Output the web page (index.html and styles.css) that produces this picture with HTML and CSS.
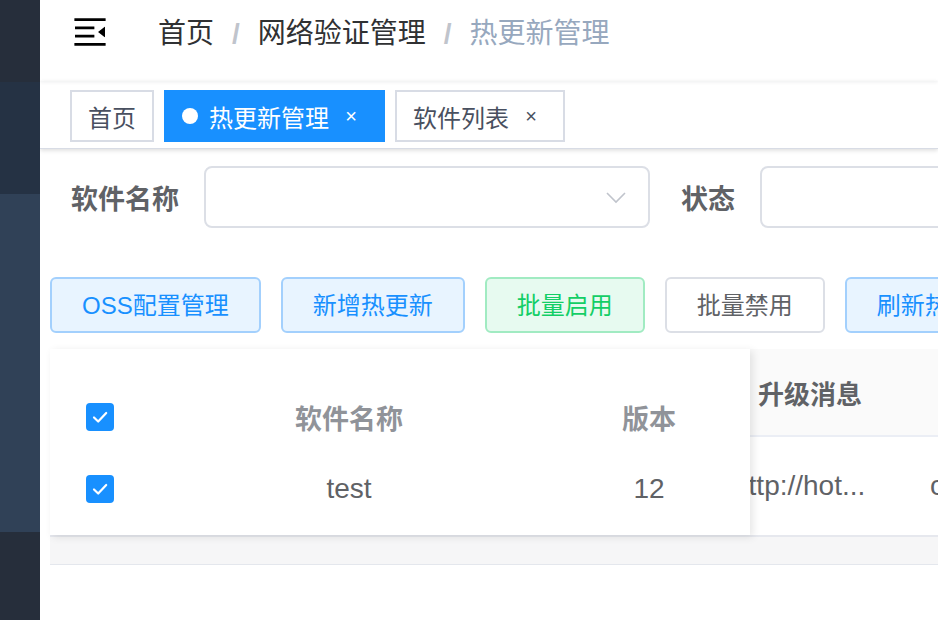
FILE: index.html
```html
<!DOCTYPE html>
<html lang="zh">
<head>
<meta charset="utf-8">
<link rel="stylesheet" href="styles.css">
</head>
<body>
<div class="app">
  <aside class="sidebar">
    <div class="sb sb-top"></div>
    <div class="sb sb-sub"></div>
    <div class="sb sb-active"></div>
    <div class="sb sb-rest"></div>
  </aside>
  <main class="main">
    <header class="navbar">
      <svg class="hamburger" viewBox="0 0 1024 1024" width="40" height="40"><path fill="#000" d="M408 442h480c4.4 0 8-3.6 8-8v-56c0-4.4-3.6-8-8-8H408c-4.4 0-8 3.6-8 8v56c0 4.4 3.6 8 8 8zm-8 204c0 4.4 3.6 8 8 8h480c4.4 0 8-3.6 8-8v-56c0-4.4-3.6-8-8-8H408c-4.4 0-8 3.6-8 8v56zm504-486H120c-4.4 0-8 3.6-8 8v56c0 4.4 3.6 8 8 8h784c4.4 0 8-3.6 8-8v-56c0-4.4-3.6-8-8-8zm0 632H120c-4.4 0-8 3.6-8 8v56c0 4.4 3.6 8 8 8h784c4.4 0 8-3.6 8-8v-56c0-4.4-3.6-8-8-8zM142.4 642.1L298.7 519a8.840 8.840 0 0 0 0-13.900L142.4 381.900c-5.800-4.600-14.400-.5-14.400 6.900v246.300a8.800 8.800 0 0 0 14.400 7z"/></svg>
      <nav class="breadcrumb">
        <span class="crumb">首页</span><span class="sep">/</span><span class="crumb">网络验证管理</span><span class="sep">/</span><span class="crumb crumb-last">热更新管理</span>
      </nav>
    </header>
    <div class="tags">
      <span class="tag">首页</span>
      <span class="tag tag-active"><span class="dot"></span>热更新管理<span class="close">×</span></span>
      <span class="tag">软件列表<span class="close">×</span></span>
    </div>
    <section class="content">
      <div class="filter">
        <label class="flabel">软件名称</label>
        <div class="select">
          <svg class="chev" viewBox="0 0 20 12" width="20" height="12"><path d="M1 1l9 9 9-9" fill="none" stroke="#c0c4cc" stroke-width="1.6"/></svg>
        </div>
        <label class="flabel flabel2">状态</label>
        <div class="select select2"></div>
      </div>
      <div class="actions">
        <button class="btn btn-blue">OSS配置管理</button>
        <button class="btn btn-blue">新增热更新</button>
        <button class="btn btn-green">批量启用</button>
        <button class="btn btn-plain">批量禁用</button>
        <button class="btn btn-blue">刷新热更新</button>
      </div>
      <div class="table">
        <div class="scroll">
          <div class="srow shead">
            <div class="c c-hidden"></div>
            <div class="c c-msg">升级消息</div>
            <div class="c c-next"></div>
          </div>
          <div class="srow sbody">
            <div class="c c-hidden"></div>
            <div class="c c-msg c-msg-body">http://hot...</div>
            <div class="c c-next">c</div>
          </div>
        </div>
        <div class="fixed">
          <div class="frow fhead">
            <div class="fc fc-sel"><span class="cb"><svg viewBox="0 0 28 28" width="28" height="28"><path d="M8 14.5l4.2 4 8-8.5" fill="none" stroke="#fff" stroke-width="2.2" stroke-linecap="round" stroke-linejoin="round"/></svg></span></div>
            <div class="fc fc-name">软件名称</div>
            <div class="fc fc-ver">版本</div>
          </div>
          <div class="frow fbody">
            <div class="fc fc-sel"><span class="cb"><svg viewBox="0 0 28 28" width="28" height="28"><path d="M8 14.5l4.2 4 8-8.5" fill="none" stroke="#fff" stroke-width="2.2" stroke-linecap="round" stroke-linejoin="round"/></svg></span></div>
            <div class="fc fc-name fc-val">test</div>
            <div class="fc fc-ver fc-val">12</div>
          </div>
        </div>
        <div class="hscroll"></div>
      </div>
    </section>
  </main>
</div>
</body>
</html>
```

FILE: styles.css
```css
* { box-sizing: border-box; }
html, body { margin: 0; padding: 0; }
body {
  width: 938px;
  height: 620px;
  overflow: hidden;
  background: #fff;
  font-family: "Helvetica Neue", "Liberation Sans", "Noto Sans CJK SC", sans-serif;
}
.app { display: flex; height: 620px; }
.sidebar { width: 40px; flex: none; display: flex; flex-direction: column; }
.sb-top { height: 82px; background: #262e3b; }
.sb-sub { height: 112px; background: #253244; }
.sb-active { height: 338px; background: #304157; }
.sb-rest { flex: 1; background: #262e3b; }

.main { flex: 1; min-width: 0; overflow: hidden; display: flex; flex-direction: column; }

.navbar {
  height: 81px;
  flex: none;
  display: flex;
  align-items: flex-start;
  padding-top: 12px;
  box-shadow: 0 1px 4px rgba(0, 21, 41, 0.08);
  position: relative;
  z-index: 2;
}
.hamburger { margin-left: 30px; transform: rotate(180deg); flex: none; }
.breadcrumb { margin-left: 48px; margin-top: 2px; font-size: 28px; line-height: 40px; color: #303133; white-space: nowrap; }
.sep { color: #c0c4cc; margin: 0 18px; font-weight: 700; }
.crumb-last { color: #97a8be; }

.tags {
  height: 68px;
  flex: none;
  padding: 9px 0 0 30px;
  display: flex;
  align-items: flex-start;
  gap: 10px;
  border-bottom: 1px solid #d8dce5;
  box-shadow: 0 2px 4px rgba(0, 0, 0, 0.10), 0 0 4px rgba(0, 0, 0, 0.04);
  position: relative;
  z-index: 1;
}
.tag {
  height: 52px;
  border: 2px solid #d8dce5;
  padding: 0 16px;
  font-size: 24px;
  color: #495060;
  display: inline-flex;
  align-items: center;
  white-space: nowrap;
}
.tag-active { background: #1890ff; border-color: #1890ff; color: #fff; }
.dot { width: 16px; height: 16px; border-radius: 50%; background: #fff; margin-right: 11px; }
.close { width: 32px; margin-left: 6px; text-align: center; font-size: 20px; line-height: 1; }

.content { padding: 0 0 0 10px; }

.filter { display: flex; align-items: center; margin-top: 17px; height: 62px; white-space: nowrap; }
.flabel { font-size: 27px; font-weight: 700; color: #606266; margin-left: 21px; margin-right: 25px; }
.flabel2 { margin-left: 31px; margin-right: 25px; }
.select {
  width: 446px;
  height: 62px;
  flex: none;
  border: 2px solid #dcdfe6;
  border-radius: 8px;
  display: flex;
  align-items: center;
  justify-content: flex-end;
  padding-right: 22px;
}
.chev { margin-top: 2px; }
.select2 { width: 300px; }

.actions { display: flex; gap: 20px; margin-top: 49px; white-space: nowrap; }
.btn {
  height: 56px;
  padding: 0 30px 3px;
  border-radius: 6px;
  font-size: 24px;
  font-family: inherit;
  border: 2px solid;
  flex: none;
}
.btn-blue { background: #e8f4ff; border-color: #a3d0fd; color: #1890ff; }
.btn-green { background: #e7faf0; border-color: #a1ebc2; color: #13ce66; }
.btn-plain { background: #fff; border-color: #dcdfe6; color: #606266; }

.table { position: relative; margin-top: 16px; width: 900px; }
.scroll { font-size: 26px; }
.srow { display: flex; white-space: nowrap; }
.shead { height: 88px; background: #fafafa; border-bottom: 2px solid #ebeef5; font-weight: 700; color: #606266; }
.sbody { height: 98px; background: #fff; color: #606266; font-size: 28px; }
.c { display: flex; align-items: center; flex: none; }
.c-hidden { width: 668px; }
.c-msg { width: 200px; padding-left: 40px; }
.c-msg-body { padding-left: 15px; }
.c-next { width: 200px; padding-left: 12px; }

.fixed {
  position: absolute;
  left: 0;
  top: 0;
  width: 700px;
  height: 186px;
  background: #fff;
  box-shadow: 3px 2px 8px rgba(0, 0, 0, 0.10);
  padding-top: 32px;
}
.frow { display: flex; height: 72px; }
.fc { display: flex; align-items: center; justify-content: center; font-size: 27px; }
.fc-sel { width: 100px; }
.fc-name { width: 398px; }
.fc-ver { width: 202px; }
.fhead .fc { color: #909399; font-weight: 700; }
.fc-val { color: #606266; font-size: 28px; }
.cb { width: 28px; height: 28px; border-radius: 4px; background: #1890ff; display: block; }
.cb svg { display: block; }

.hscroll { height: 30px; border-top: 2px solid #e6e8ee; border-bottom: 1px solid #e4e7ed; background: #f6f6f7; }
```
